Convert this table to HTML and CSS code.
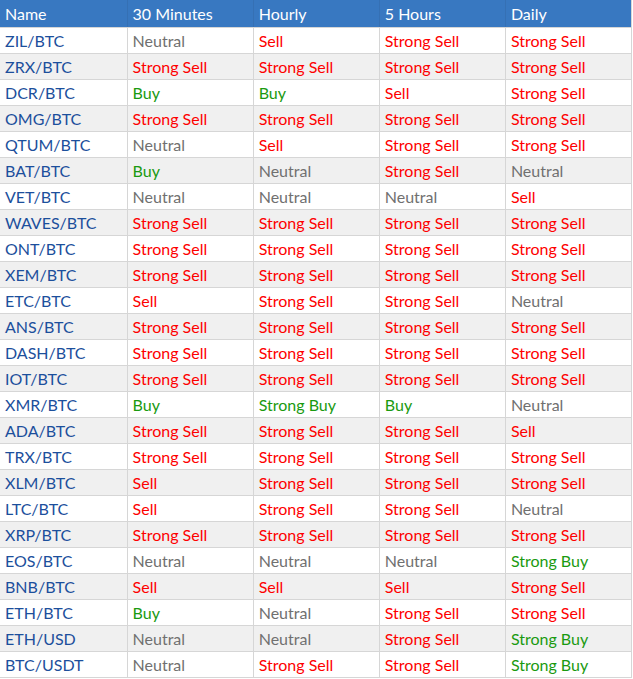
FILE: index.html
```html
<!DOCTYPE html>
<html>
<head>
<meta charset="utf-8">
<link rel="stylesheet" href="styles.css">
</head>
<body>
<table class="signals">
<colgroup><col class="c1"><col class="c"><col class="c"><col class="c"><col class="c"></colgroup>
<thead>
<tr><th>Name</th><th>30 Minutes</th><th>Hourly</th><th>5 Hours</th><th>Daily</th></tr>
</thead>
<tbody>
<tr><td class="n">ZIL/BTC</td><td class="neu">Neutral</td><td class="s">Sell</td><td class="s">Strong Sell</td><td class="s">Strong Sell</td></tr>
<tr><td class="n">ZRX/BTC</td><td class="s">Strong Sell</td><td class="s">Strong Sell</td><td class="s">Strong Sell</td><td class="s">Strong Sell</td></tr>
<tr><td class="n">DCR/BTC</td><td class="b">Buy</td><td class="b">Buy</td><td class="s">Sell</td><td class="s">Strong Sell</td></tr>
<tr><td class="n">OMG/BTC</td><td class="s">Strong Sell</td><td class="s">Strong Sell</td><td class="s">Strong Sell</td><td class="s">Strong Sell</td></tr>
<tr><td class="n">QTUM/BTC</td><td class="neu">Neutral</td><td class="s">Sell</td><td class="s">Strong Sell</td><td class="s">Strong Sell</td></tr>
<tr><td class="n">BAT/BTC</td><td class="b">Buy</td><td class="neu">Neutral</td><td class="s">Strong Sell</td><td class="neu">Neutral</td></tr>
<tr><td class="n">VET/BTC</td><td class="neu">Neutral</td><td class="neu">Neutral</td><td class="neu">Neutral</td><td class="s">Sell</td></tr>
<tr><td class="n">WAVES/BTC</td><td class="s">Strong Sell</td><td class="s">Strong Sell</td><td class="s">Strong Sell</td><td class="s">Strong Sell</td></tr>
<tr><td class="n">ONT/BTC</td><td class="s">Strong Sell</td><td class="s">Strong Sell</td><td class="s">Strong Sell</td><td class="s">Strong Sell</td></tr>
<tr><td class="n">XEM/BTC</td><td class="s">Strong Sell</td><td class="s">Strong Sell</td><td class="s">Strong Sell</td><td class="s">Strong Sell</td></tr>
<tr><td class="n">ETC/BTC</td><td class="s">Sell</td><td class="s">Strong Sell</td><td class="s">Strong Sell</td><td class="neu">Neutral</td></tr>
<tr><td class="n">ANS/BTC</td><td class="s">Strong Sell</td><td class="s">Strong Sell</td><td class="s">Strong Sell</td><td class="s">Strong Sell</td></tr>
<tr><td class="n">DASH/BTC</td><td class="s">Strong Sell</td><td class="s">Strong Sell</td><td class="s">Strong Sell</td><td class="s">Strong Sell</td></tr>
<tr><td class="n">IOT/BTC</td><td class="s">Strong Sell</td><td class="s">Strong Sell</td><td class="s">Strong Sell</td><td class="s">Strong Sell</td></tr>
<tr><td class="n">XMR/BTC</td><td class="b">Buy</td><td class="b">Strong Buy</td><td class="b">Buy</td><td class="neu">Neutral</td></tr>
<tr><td class="n">ADA/BTC</td><td class="s">Strong Sell</td><td class="s">Strong Sell</td><td class="s">Strong Sell</td><td class="s">Sell</td></tr>
<tr><td class="n">TRX/BTC</td><td class="s">Strong Sell</td><td class="s">Strong Sell</td><td class="s">Strong Sell</td><td class="s">Strong Sell</td></tr>
<tr><td class="n">XLM/BTC</td><td class="s">Sell</td><td class="s">Strong Sell</td><td class="s">Strong Sell</td><td class="s">Strong Sell</td></tr>
<tr><td class="n">LTC/BTC</td><td class="s">Sell</td><td class="s">Strong Sell</td><td class="s">Strong Sell</td><td class="neu">Neutral</td></tr>
<tr><td class="n">XRP/BTC</td><td class="s">Strong Sell</td><td class="s">Strong Sell</td><td class="s">Strong Sell</td><td class="s">Strong Sell</td></tr>
<tr><td class="n">EOS/BTC</td><td class="neu">Neutral</td><td class="neu">Neutral</td><td class="neu">Neutral</td><td class="b">Strong Buy</td></tr>
<tr><td class="n">BNB/BTC</td><td class="s">Sell</td><td class="s">Sell</td><td class="s">Sell</td><td class="s">Strong Sell</td></tr>
<tr><td class="n">ETH/BTC</td><td class="b">Buy</td><td class="neu">Neutral</td><td class="s">Strong Sell</td><td class="s">Strong Sell</td></tr>
<tr><td class="n">ETH/USD</td><td class="neu">Neutral</td><td class="neu">Neutral</td><td class="s">Strong Sell</td><td class="b">Strong Buy</td></tr>
<tr><td class="n">BTC/USDT</td><td class="neu">Neutral</td><td class="s">Strong Sell</td><td class="s">Strong Sell</td><td class="b">Strong Buy</td></tr>
</tbody>
</table>
</body>
</html>
```
FILE: styles.css
```css
html, body {
  margin: 0;
  padding: 0;
  background: #ffffff;
}
body {
  font-family: Lato, "Open Sans", sans-serif;
  font-size: 16px;
}
.signals {
  border-collapse: collapse;
  table-layout: fixed;
  width: 632px;
}
.c1 { width: 127px; }
.c { width: 126px; }
.signals th {
  background: #3878c1;
  color: #ffffff;
  font-weight: normal;
  text-align: left;
  height: 27px;
  padding: 0 0 0 5px;
  border-right: 1px solid #3570b4;
  border-bottom: 1px solid #d6d6d6;
  box-sizing: border-box;
  white-space: nowrap;
}
.signals th:last-child {
  border-right: 1px solid #d6d6d6;
}
.signals td {
  height: 26px;
  padding: 0 0 0 5px;
  border-right: 1px solid #d6d6d6;
  border-bottom: 1px solid #d6d6d6;
  box-sizing: border-box;
  white-space: nowrap;
}
.signals th:first-child, .signals td:first-child {
  padding-left: 5px;
}
.signals tbody tr:nth-child(even) td {
  background: #f0f0f0;
}
.n { color: #1c4f9c; }
.neu { color: #707070; }
.s { color: #fe0000; }
.b { color: #1a9a10; }
```
